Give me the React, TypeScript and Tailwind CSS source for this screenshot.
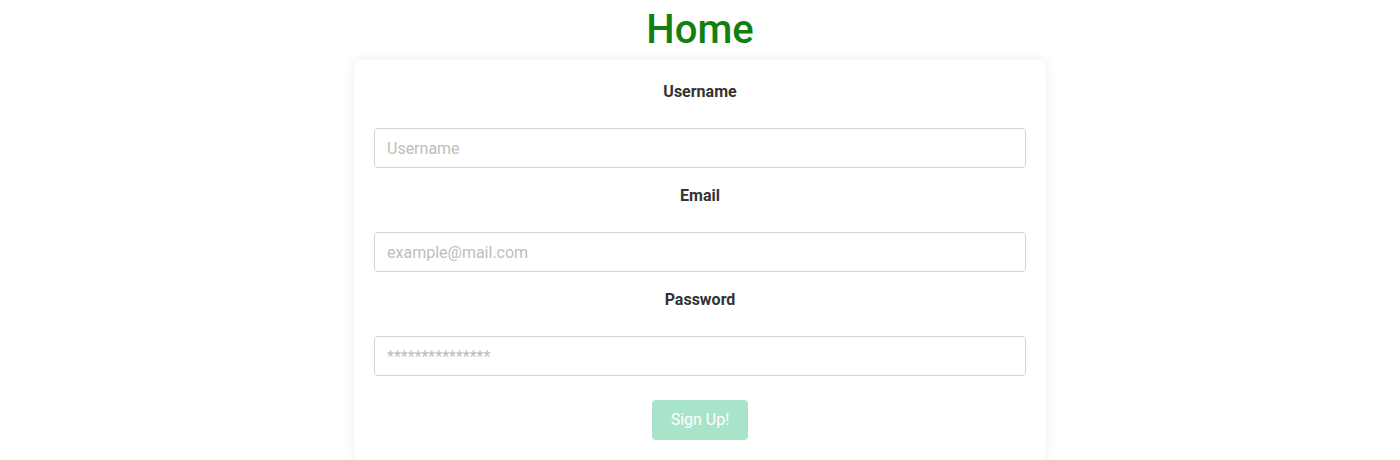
export default function App() {
  const fields = [
    { label: 'Username', placeholder: 'Username', type: 'text' },
    { label: 'Email', placeholder: 'example@mail.com', type: 'email' },
    { label: 'Password', placeholder: '***************', type: 'text' },
  ]

  return (
    <div className="min-h-screen bg-white font-['Roboto',sans-serif]">
      <h1 className="text-center text-[40px] font-medium leading-[60px] text-[#118011]">Home</h1>
      <div className="mx-auto w-[692px] rounded-md bg-white px-5 pt-5 pb-5 shadow-[0_0_12px_rgba(0,0,0,0.08)]">
        {fields.map((f, i) => (
          <div key={f.label} className={i > 0 ? 'mt-4' : ''}>
            <label className="block text-center text-base font-bold leading-6 text-[#333]">
              {f.label}
            </label>
            <input
              type={f.type}
              placeholder={f.placeholder}
              className="mt-6 block h-10 w-full rounded border border-[#d4d4d4] px-3 text-base text-[#333] outline-none placeholder:text-[#bdbdbd]"
            />
          </div>
        ))}
        <div className="mt-6 flex justify-center">
          <button className="h-10 w-24 rounded bg-[#a8e4c9] text-base text-white">Sign Up!</button>
        </div>
      </div>
    </div>
  )
}
